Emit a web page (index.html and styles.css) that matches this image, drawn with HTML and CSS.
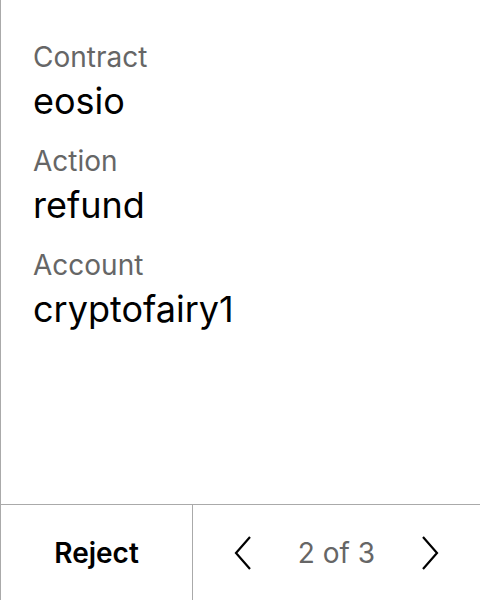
FILE: index.html
```html
<!DOCTYPE html>
<html>
<head>
<meta charset="utf-8">
<link rel="stylesheet" href="styles.css">
</head>
<body>
<div class="screen">
  <div class="fields">
    <div class="field">
      <div class="label">Contract</div>
      <div class="value">eosio</div>
    </div>
    <div class="field">
      <div class="label">Action</div>
      <div class="value">refund</div>
    </div>
    <div class="field">
      <div class="label">Account</div>
      <div class="value">cryptofairy1</div>
    </div>
  </div>
  <div class="footer">
    <div class="reject">Reject</div>
    <div class="pager">
      <svg class="chev" width="18" height="34" viewBox="0 0 18 34"><path d="M16 1 L2 17 L16 33" fill="none" stroke="#000" stroke-width="2.2"/></svg>
      <span class="count">2 of 3</span>
      <svg class="chev" width="18" height="34" viewBox="0 0 18 34"><path d="M2 1 L16 17 L2 33" fill="none" stroke="#000" stroke-width="2.2"/></svg>
    </div>
  </div>
</div>
</body>
</html>
```
FILE: styles.css
```css
html, body {
  margin: 0;
  padding: 0;
  background: #fff;
}
.screen {
  width: 480px;
  height: 600px;
  box-sizing: border-box;
  border-left: 1px solid #aaa;
  display: flex;
  flex-direction: column;
  font-family: Inter, "Noto Sans", sans-serif;
}
.fields {
  flex: 1;
  padding: 40px 0 0 32px;
  display: flex;
  flex-direction: column;
  gap: 21px;
}
.field {
  display: flex;
  flex-direction: column;
  gap: 5px;
}
.label {
  font-size: 28px;
  line-height: 34px;
  color: #666;
}
.value {
  font-size: 36px;
  line-height: 44px;
  color: #000;
}
.footer {
  height: 96px;
  box-sizing: border-box;
  border-top: 1px solid #aaa;
  display: grid;
  grid-template-columns: 192px 1fr;
}
.reject {
  border-right: 1px solid #aaa;
  display: flex;
  align-items: center;
  justify-content: center;
  font-size: 28px;
  font-weight: 600;
  color: #000;
}
.pager {
  display: flex;
  align-items: center;
  justify-content: space-between;
  padding: 0 41px 0 41px;
}
.count {
  font-size: 28px;
  color: #666;
}
.chev {
  display: block;
}
```
